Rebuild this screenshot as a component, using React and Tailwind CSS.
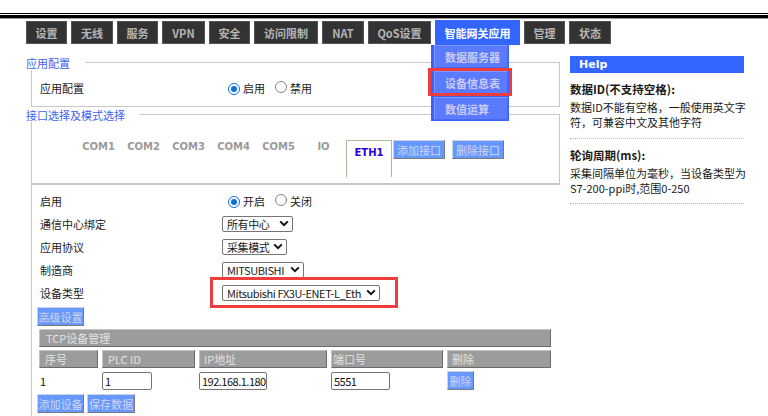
import React from "react";

const tabs = [
  { label: "设置", w: "w-[41px]" },
  { label: "无线", w: "w-[42px]" },
  { label: "服务", w: "w-[41px]" },
  { label: "VPN", w: "w-[43px]" },
  { label: "安全", w: "w-[41px]" },
  { label: "访问限制", w: "w-[64px]" },
  { label: "NAT", w: "w-[42px]" },
  { label: "QoS设置", w: "w-[63px]" },
  { label: "智能网关应用", w: "w-[85px]", active: true },
  { label: "管理", w: "w-[41px]" },
  { label: "状态", w: "w-[42px]" },
];

const ports = ["COM1", "COM2", "COM3", "COM4", "COM5", "IO"];

function Chevron() {
  return (
    <svg width="10" height="7" viewBox="0 0 10 7" className="shrink-0">
      <path d="M1.2 1.4 L5 5.2 L8.8 1.4" fill="none" stroke="#111" strokeWidth="2" />
    </svg>
  );
}

function Radio({ checked }) {
  if (checked) {
    return (
      <span className="inline-flex h-[12px] w-[12px] shrink-0 items-center justify-center rounded-full border border-[#0b6fe0] bg-white">
        <span className="h-[6px] w-[6px] rounded-full bg-[#0b6fe0]" />
      </span>
    );
  }
  return <span className="inline-block h-[12px] w-[12px] shrink-0 rounded-full border border-[#858585] bg-white" />;
}

function RadioPair({ a, b }) {
  return (
    <div className="flex items-center">
      <span className="ml-[6px]"><Radio checked /></span>
      <span className="ml-[3px]">{a}</span>
      <span className="ml-[10px]"><Radio /></span>
      <span className="ml-[3px]">{b}</span>
    </div>
  );
}

function Select({ w, text }) {
  return (
    <div className={`flex h-[16px] items-center justify-between gap-[2px] rounded-[2px] border border-[#767676] bg-white pl-[4px] pr-[3px] ${w}`}>
      <span className="min-w-0 flex-1 overflow-hidden whitespace-nowrap tracking-[-0.4px]">{text}</span>
      <Chevron />
    </div>
  );
}

function Row({ label, children }) {
  return (
    <div className="flex h-[23px] items-center pl-[8px]">
      <span className="w-[182px] shrink-0">{label}</span>
      {children}
    </div>
  );
}

function Btn({ w, children }) {
  return (
    <div className={`flex h-[19px] shrink-0 items-center justify-center border border-b-[#7a7a7a] border-l-[#cdd3e6] border-r-[#7a7a7a] border-t-[#cdd3e6] bg-[#6699ff] text-[#d2d5ee] ${w}`}>
      {children}
    </div>
  );
}

function GrayCell({ children, pad }) {
  return (
    <div className={`flex h-[18px] items-center border border-b-[#6a6a6a] border-l-[#c4c4c4] border-r-[#6a6a6a] border-t-[#c4c4c4] bg-[#9c9c9c] text-[#e2e2e2] ${pad}`}>
      {children}
    </div>
  );
}

function Field({ w, value }) {
  return (
    <div className={`flex h-[18px] items-center whitespace-nowrap rounded-[2px] border border-[#767676] bg-white pl-[2px] tracking-[-0.5px] text-[#111] ${w}`}>
      {value}
    </div>
  );
}

function Dropdown() {
  return (
    <div className="absolute left-[-4px] top-[25px] z-20 flex w-[78px] flex-col gap-[3px] bg-[#3a62ff] pb-[1px] pl-[3px] pr-[1px]">
      {["数据服务器", "设备信息表", "数值运算"].map((item) => (
        <div
          key={item}
          className="flex h-[23px] items-center border border-b-[#4a68f0] border-l-[#7f98ff] border-r-[#4a68f0] border-t-[#7f98ff] bg-[#5a7bff] pl-[10px] font-bold text-[#c9cbf2]"
        >
          {item}
        </div>
      ))}
      <div className="absolute left-[-3px] top-[23px] h-[28px] w-[84px] border-[3px] border-[#ef3c3c]" />
    </div>
  );
}

function Legend({ text, gap }) {
  return (
    <div className="flex h-[14px]">
      <span className="text-[#3d63f2]">{text}</span>
      <div className={`mt-[6px] flex-1 border-r border-t border-[#c8c8c8] ${gap}`} />
    </div>
  );
}

export default function App() {
  return (
    <div className="relative h-[416px] w-[768px] overflow-hidden bg-white font-['Noto_Sans_CJK_SC',sans-serif] text-[11px] leading-[14px] text-[#1a1a1a]">
      {/* top rules */}
      <div className="pt-[13px]">
        <div className="h-px bg-black" />
        <div className="h-px bg-white" />
        <div className="h-[3px] bg-black" />
        <div className="h-px bg-[#9a9a9a]" />
      </div>

      {/* main nav */}
      <nav className="relative z-10 ml-[26px] mt-[2px] flex h-[23px] items-start gap-[4px]">
        {tabs.map((t) =>
          t.active ? (
            <div
              key={t.label}
              className={`relative -mt-px flex h-[25px] shrink-0 items-center justify-center bg-[#3366ff] font-bold text-white ${t.w}`}
            >
              {t.label}
              <Dropdown />
            </div>
          ) : (
            <div
              key={t.label}
              className={`flex h-[23px] shrink-0 items-center justify-center border border-[#555] bg-[#333] font-bold text-[#b5b5b5] ${t.w}`}
            >
              {t.label}
            </div>
          )
        )}
      </nav>

      <div className="mt-[12px] flex">
        {/* left column */}
        <div className="ml-[26px] w-[534px]">
          <Legend text="应用配置" gap="ml-[15px]" />
          <div className="ml-[5px] border-b border-l border-r border-[#c8c8c8] pb-[7px] pt-[6px]">
            <Row label="应用配置">
              <RadioPair a="启用" b="禁用" />
            </Row>
          </div>

          <div className="mt-px">
            <Legend text="接口选择及模式选择" gap="ml-[14px]" />
            <div className="ml-[5px] border-b-2 border-l border-r border-[#c8c8c8] pb-[6px] pt-[18px]">
              <div className="ml-[44px] flex items-start">
                {ports.map((p) => (
                  <div
                    key={p}
                    className="h-[14px] w-[45px] shrink-0 text-center font-['DejaVu_Sans',sans-serif] text-[10px] font-bold leading-[14px] text-[#9a9a9a]"
                  >
                    {p}
                  </div>
                ))}
                <div className="h-[37px] w-[46px] shrink-0 border-l border-r border-t border-[#a8bf98] pt-[5px] text-center font-['DejaVu_Sans',sans-serif] text-[10px] font-bold leading-[14px] text-[#2a00e6]">
                  ETH1
                </div>
                <div className="ml-px">
                  <Btn w="w-[52px]">添加接口</Btn>
                </div>
                <div className="ml-[7px]">
                  <Btn w="w-[52px]">删除接口</Btn>
                </div>
              </div>
            </div>
          </div>

          <div className="ml-[5px] border-l border-[#c8c8c8] pb-[10px] pt-[4px]">
            <Row label="启用">
              <RadioPair a="开启" b="关闭" />
            </Row>
            <Row label="通信中心绑定">
              <Select w="w-[71px]" text="所有中心" />
            </Row>
            <Row label="应用协议">
              <Select w="w-[65px]" text="采集模式" />
            </Row>
            <Row label="制造商">
              <Select w="w-[82px]" text="MITSUBISHI" />
            </Row>
            <Row label="设备类型">
              <div className="relative">
                <Select w="w-[158px]" text="Mitsubishi FX3U-ENET-L_Eth" />
                <div className="absolute left-[-12px] top-[-8px] h-[31px] w-[188px] border-[3px] border-[#ef3c3c]" />
              </div>
            </Row>

            <div className="ml-[5px] mt-[3px] flex">
              <Btn w="w-[47px]">高级设置</Btn>
            </div>

            <div className="ml-[7px] mt-[3px] w-[512px]">
              <GrayCell pad="pl-[6px]">TCP设备管理</GrayCell>
              <div className="mt-[3px] grid grid-cols-[59px_93px_128px_112px_104px] gap-x-[4px]">
                <GrayCell pad="pl-[5px]">序号</GrayCell>
                <GrayCell pad="pl-[5px]">PLC ID</GrayCell>
                <GrayCell pad="pl-[4px]">IP地址</GrayCell>
                <GrayCell pad="pl-[1px]">端口号</GrayCell>
                <GrayCell pad="pl-[4px]">删除</GrayCell>
              </div>
              <div className="mt-[3px] grid h-[19px] grid-cols-[59px_93px_128px_112px_104px] items-center gap-x-[4px]">
                <div className="pl-px text-[#111]">1</div>
                <Field w="w-[50px]" value="1" />
                <Field w="w-[68px]" value="192.168.1.180" />
                <Field w="w-[59px]" value="5551" />
                <div className="flex">
                  <Btn w="w-[27px]">删除</Btn>
                </div>
              </div>
            </div>

            <div className="ml-[5px] mt-[4px] flex gap-[3px]">
              <Btn w="w-[47px]">添加设备</Btn>
              <Btn w="w-[48px]">保存数据</Btn>
            </div>
          </div>
        </div>

        {/* help column */}
        <aside className="ml-[10px] w-[174px] text-[#1a1a1a]">
          <div className="flex h-[17px] items-center bg-[#3366ff] pl-[9px] font-['DejaVu_Sans',sans-serif] text-[11px] font-bold text-white">
            Help
          </div>
          <div className="mt-[9px] whitespace-nowrap text-[11.5px] font-bold leading-[15px]">数据ID(不支持空格):</div>
          <div className="mt-[3px] whitespace-nowrap leading-[15px]">
            数据ID不能有空格，一般使用英文字
            <br />
            符，可兼容中文及其他字符
          </div>
          <div className="mt-[8px] border-b border-dotted border-[#b8b8b8]" />
          <div className="mt-[9px] whitespace-nowrap text-[11.5px] font-bold leading-[15px]">轮询周期(ms):</div>
          <div className="mt-[3px] whitespace-nowrap leading-[15px]">
            采集间隔单位为毫秒，当设备类型为
            <br />
            S7-200-ppi时,范围0-250
          </div>
          <div className="mt-[7px] border-b border-dotted border-[#b8b8b8]" />
        </aside>
      </div>
    </div>
  );
}
